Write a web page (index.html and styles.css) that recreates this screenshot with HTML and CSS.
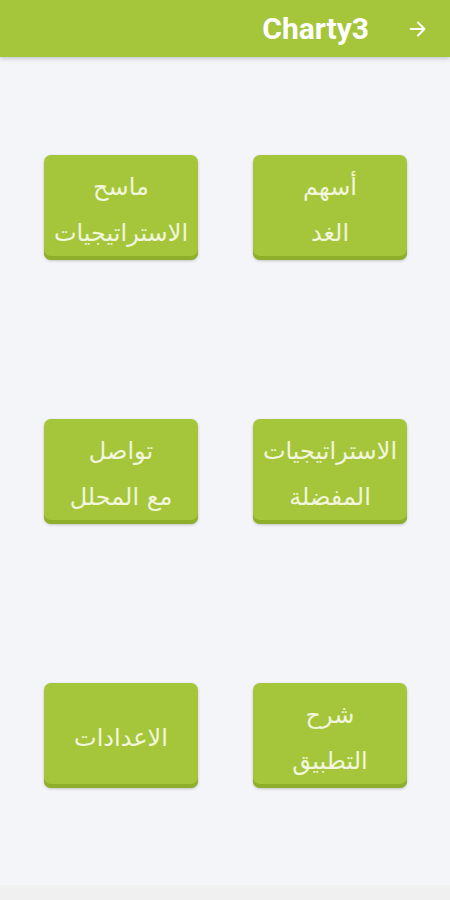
FILE: index.html
```html
<!DOCTYPE html>
<html lang="ar" dir="rtl">
<head>
    <meta charset="UTF-8">
    <meta name="viewport" content="width=device-width, initial-scale=1.0">
    <title>Charty3</title>
    <link rel="stylesheet" href="styles.css">
</head>
<body>
    <div class="appbar">
        <button class="back" aria-label="رجوع">
            <svg width="22" height="22" viewBox="0 0 24 24"><path d="M4 12h15M12 5l7 7-7 7" fill="none" stroke="#fff" stroke-width="2.2" stroke-linecap="round" stroke-linejoin="round"/></svg>
        </button>
        <h1 class="title" dir="ltr">Charty3</h1>
    </div>

    <div class="menu">
        <button class="tile">أسهم<br>الغد</button>
        <button class="tile">ماسح<br>الاستراتيجيات</button>
        <button class="tile">الاستراتيجيات<br>المفضلة</button>
        <button class="tile">تواصل<br>مع المحلل</button>
        <button class="tile">شرح<br>التطبيق</button>
        <button class="tile">الاعدادات</button>
    </div>

    <div class="navbar"></div>
</body>
</html>
```

FILE: styles.css
```css
body {
    margin: 0;
    padding: 0;
    height: 900px;
    display: flex;
    flex-direction: column;
    background-color: #f4f5f9;
    font-family: "DejaVu Sans", "Noto Sans", sans-serif;
    overflow: hidden;
}
.appbar {
    height: 57px;
    flex-shrink: 0;
    display: flex;
    align-items: center;
    background-color: #a5c63b;
    box-shadow: 0 2px 4px rgba(0, 0, 0, 0.18);
    padding-right: 20px;
}
.back {
    background: none;
    border: none;
    padding: 0;
    width: 24px;
    height: 24px;
    display: flex;
    align-items: center;
    justify-content: center;
}
.title {
    margin: 0 37px 0 0;
    font-family: Roboto, "Liberation Sans", sans-serif;
    font-weight: 700;
    font-size: 30px;
    color: #ffffff;
}
.menu {
    flex: 1;
    display: grid;
    grid-template-columns: 154px 154px;
    grid-auto-rows: 105px;
    column-gap: 55px;
    row-gap: 159px;
    padding: 98px 43px 0 0;
}
.tile {
    border: none;
    border-radius: 7px;
    background-color: #a5c63b;
    box-shadow: inset 0 -4px 0 #8eae2c, 0 1px 3px rgba(0, 0, 0, 0.2);
    color: #f1f6dd;
    font-family: "DejaVu Sans", sans-serif;
    font-size: 24px;
    line-height: 46px;
    padding: 4px 0 0;
    white-space: nowrap;
    cursor: pointer;
}
.navbar {
    height: 15px;
    flex-shrink: 0;
    background-color: #f0f0f0;
}
```
